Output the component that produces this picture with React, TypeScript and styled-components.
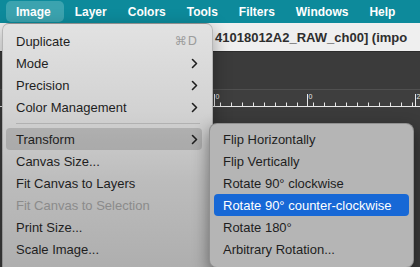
import styled, {createGlobalStyle} from "styled-components";

const GlobalStyle = createGlobalStyle`
  html, body {
    margin: 0;
    padding: 0;
    background: #3b3b3b;
  }
  * {
    box-sizing: border-box;
  }
`

const topMenus = ['Image', 'Layer', 'Colors', 'Tools', 'Filters', 'Windows', 'Help']

type Item = {label?: string, shortcut?: string, sub?: boolean, disabled?: boolean, sep?: boolean, active?: boolean}

const imageItems: Item[] = [
    {label: 'Duplicate', shortcut: '⌘D'},
    {label: 'Mode', sub: true},
    {label: 'Precision', sub: true},
    {label: 'Color Management', sub: true},
    {sep: true},
    {label: 'Transform', sub: true, active: true},
    {label: 'Canvas Size...'},
    {label: 'Fit Canvas to Layers'},
    {label: 'Fit Canvas to Selection', disabled: true},
    {label: 'Print Size...'},
    {label: 'Scale Image...'},
    {label: 'Crop to Selection', disabled: true},
]

const transformItems = [
    'Flip Horizontally',
    'Flip Vertically',
    'Rotate 90° clockwise',
    'Rotate 90° counter-clockwise',
    'Rotate 180°',
    'Arbitrary Rotation...',
]

const Chevron = () => (
    <svg width="7" height="11" viewBox="0 0 7 11">
        <path d="M1.5 1.5 L5.5 5.5 L1.5 9.5" fill="none" stroke="#1e1e1e" strokeWidth="1.6" strokeLinecap="round" strokeLinejoin="round"/>
    </svg>
)

const Ruler = () => {
    const majors = [{x: 214, label: '0'}, {x: 307, label: '0'}, {x: 415, label: '2'}]
    const ticks: number[] = []
    for (let m = 0; m < majors.length; m++)
    {
        const start = majors[m].x
        const end = m + 1 < majors.length ? majors[m + 1].x : 420
        for (let x = start + 5.5; x < end - 3; x += 11) ticks.push(Math.round(x) + 0.5)
    }
    return (
        <svg width="420" height="18" viewBox="0 0 420 18">
            <line x1="0" y1="16.5" x2="420" y2="16.5" stroke="#e8e8e8" strokeWidth="1"/>
            {majors.map((m) => (
                <g key={m.x}>
                    <line x1={m.x + 0.5} y1="4" x2={m.x + 0.5} y2="17" stroke="#e8e8e8" strokeWidth="1"/>
                    <text x={m.x + 1.5} y="9" fontSize="7" fill="#e8e8e8" fontFamily="Liberation Sans, sans-serif">{m.label}</text>
                </g>
            ))}
            {ticks.map((x) => (
                <line key={x} x1={x} y1="12.5" x2={x} y2="17" stroke="#e8e8e8" strokeWidth="1"/>
            ))}
        </svg>
    )
}

export default function App()
{
    return (
        <Screen>
            <GlobalStyle/>

            <MenuBar>
                {topMenus.map((name) => <TopItem key={name} $open={name === 'Image'}>{name}</TopItem>)}
            </MenuBar>

            <TitleBar>41018012A2_RAW_ch00] (impo</TitleBar>

            <Canvas>
                <RulerStrip>
                    <Ruler/>
                </RulerStrip>
            </Canvas>

            <Menu>
                {imageItems.map((item, i) => item.sep
                    ? <Separator key={i}/>
                    : (
                        <Row key={i} $active={item.active} $disabled={item.disabled}>
                            <span>{item.label}</span>
                            {item.shortcut && <Shortcut>{item.shortcut}</Shortcut>}
                            {item.sub && <Chevron/>}
                            {item.active && (
                                <SubMenu>
                                    {transformItems.map((t) => (
                                        <SubRow key={t} $selected={t === 'Rotate 90° counter-clockwise'}>{t}</SubRow>
                                    ))}
                                </SubMenu>
                            )}
                        </Row>
                    ))}
            </Menu>
        </Screen>
    )
}


const Screen = styled.div`
  position: relative;
  width: 420px;
  height: 267px;
  overflow: hidden;
  display: flex;
  flex-direction: column;
  font-family: "Liberation Sans", Arial, sans-serif;
  font-size: 13px;
  color: #1e1e1e;
  background: #3b3b3b;
`

const MenuBar = styled.div`
  height: 23px;
  flex-shrink: 0;
  background: #0d8a9b;
  display: flex;
  align-items: center;
  padding-left: 6px;
  gap: 1px;
`

const TopItem = styled.div<{$open?: boolean}>`
  height: 21px;
  display: flex;
  align-items: center;
  padding: 0 10px;
  border-radius: 5px;
  color: #ffffff;
  font-weight: bold;
  font-size: 12px;
  background: ${p => p.$open ? '#3ba3af' : 'transparent'};
  ${p => p.$open && 'padding-right: 13px;'}
`

const TitleBar = styled.div`
  height: 29px;
  flex-shrink: 0;
  background: #efefef;
  border-bottom: 1px solid #2c2c2c;
  display: flex;
  align-items: center;
  padding-left: 215px;
  font-weight: bold;
  font-size: 13px;
  color: #2e2e2e;
  white-space: nowrap;
  overflow: hidden;
`

const Canvas = styled.div`
  flex: 1;
  background: #3b3b3b;
  padding-top: 37px;
`

const RulerStrip = styled.div`
  height: 19px;
  border-top: 1px solid #505050;
  background: #3e3e3e;
  svg {
    display: block;
  }
`

const Menu = styled.div`
  position: absolute;
  left: 2px;
  top: 23px;
  width: 211px;
  height: 290px;
  padding: 6px 0;
  border: 1px solid rgba(0, 0, 0, 0.18);
  border-radius: 7px;
  background: linear-gradient(180deg, #e2e2e2 0%, #d2d2d2 30%, #bcbcbc 55%, #aeaeae 85%);
  box-shadow: 0 6px 18px rgba(0, 0, 0, 0.35);
`

const Row = styled.div<{$active?: boolean, $disabled?: boolean}>`
  position: relative;
  height: 22px;
  margin: 0 10px 0 3px;
  padding: 0 4px 0 10px;
  display: flex;
  align-items: center;
  justify-content: space-between;
  border-radius: 4px;
  color: ${p => p.$disabled ? '#8b8b8b' : '#1e1e1e'};
  background: ${p => p.$active ? 'rgba(0, 0, 0, 0.14)' : 'transparent'};
  white-space: nowrap;
`

const Shortcut = styled.span`
  color: #9c9c9c;
  font-family: "DejaVu Sans", "Liberation Sans", sans-serif;
  font-size: 12px;
  letter-spacing: 1px;
`

const Separator = styled.div`
  height: 10px;
  margin: 0 12px 0 13px;
  display: flex;
  align-items: center;
  &::after {
    content: '';
    flex: 1;
    height: 1px;
    background: rgba(0, 0, 0, 0.14);
  }
`

const SubMenu = styled.div`
  position: absolute;
  left: calc(100% + 7px);
  top: -5px;
  width: 205px;
  padding: 4px 0 7px;
  border: 1px solid rgba(0, 0, 0, 0.2);
  border-radius: 8px;
  background: #b5b5b5;
  box-shadow: 0 6px 16px rgba(0, 0, 0, 0.45);
`

const SubRow = styled.div<{$selected?: boolean}>`
  height: 22px;
  margin: 0 4px 0 4px;
  padding: 0 9px;
  display: flex;
  align-items: center;
  border-radius: 4px;
  white-space: nowrap;
  color: ${p => p.$selected ? '#ffffff' : '#1e1e1e'};
  background: ${p => p.$selected ? '#1768d6' : 'transparent'};
`
